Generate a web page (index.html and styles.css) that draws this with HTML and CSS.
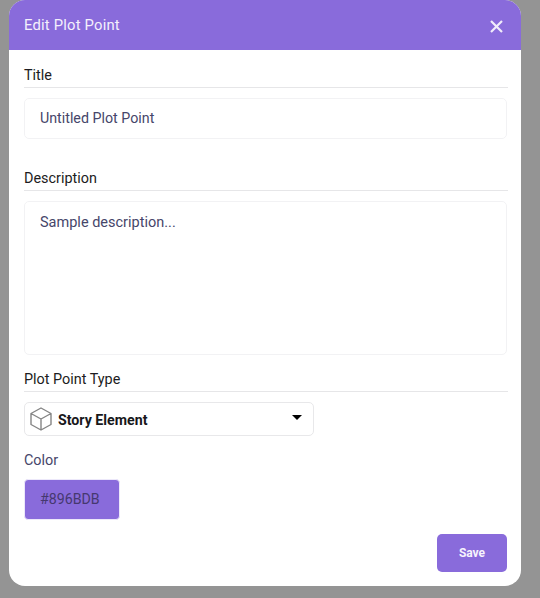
FILE: index.html
```html
<!DOCTYPE html>
<html lang="en">
<head>
    <meta charset="UTF-8">
    <title>Edit Plot Point</title>
    <link rel="stylesheet" href="styles.css">
</head>
<body>
<div class="modal">
    <header class="modal-header">
        <span class="modal-title">Edit Plot Point</span>
        <svg class="close" width="13" height="13" viewBox="0 0 13 13">
            <path d="M1 1L12 12M12 1L1 12" fill="none" stroke="#f1ecfb" stroke-width="2.2"/>
        </svg>
    </header>
    <section class="modal-body">
        <div class="label">Title</div>
        <div class="field title-field">Untitled Plot Point</div>
        <div class="label desc-label">Description</div>
        <div class="field desc-field">Sample description...</div>
        <div class="label type-label">Plot Point Type</div>
        <div class="select">
            <svg class="cube" width="24" height="24" viewBox="0 0 24 24">
                <path d="M12 1L22 6.5V17.5L12 23L2 17.5V6.5ZM2 6.5L12 12L22 6.5M12 12V23" fill="none" stroke="#858585" stroke-width="1.4" stroke-linejoin="round"/>
            </svg>
            <span class="select-text">Story Element</span>
            <span class="caret"></span>
        </div>
        <div class="color-label">Color</div>
        <div class="swatch">#896BDB</div>
        <div class="actions">
            <div class="save">Save</div>
        </div>
    </section>
</div>
</body>
</html>
```

FILE: styles.css
```css
* {
    margin: 0;
    padding: 0;
    box-sizing: border-box;
}

html, body {
    width: 100%;
    height: 100%;
    overflow: hidden;
}

body {
    background: #949494;
    font-family: Roboto, "Liberation Sans", sans-serif;
    padding-left: 9px;
}

.modal {
    width: 512px;
    height: 586px;
    background: white;
    border-radius: 16px;
    overflow: hidden;
}

.modal-header {
    height: 50px;
    background: #896bdb;
    display: flex;
    align-items: center;
    justify-content: space-between;
    padding: 0 18px 0 15px;
}

.modal-title {
    color: #f4f0fc;
    font-size: 14.8px;
    letter-spacing: 0.2px;
}

.close {
    margin-top: 3px;
}

.modal-body {
    padding: 16px 13px 0 15px;
}

.label {
    height: 22px;
    line-height: 19px;
    font-size: 14.4px;
    font-weight: 450;
    color: #1c1c21;
    border-bottom: 1px solid #e6e6e8;
}

.field {
    border: 1px solid #f2f2f4;
    border-radius: 5px;
    margin-top: 10px;
    margin-right: 1px;
    padding-left: 15px;
    color: #46466a;
}

.title-field {
    height: 41px;
    line-height: 39px;
    font-size: 14.25px;
}

.desc-label {
    margin-top: 30px;
}

.desc-field {
    height: 154px;
    padding-top: 12px;
    line-height: 18px;
    font-size: 14.5px;
}

.type-label {
    margin-top: 15px;
}

.select {
    width: 290px;
    height: 34px;
    margin-top: 10px;
    border: 1px solid #e8e8ea;
    border-radius: 5px;
    display: flex;
    align-items: center;
    padding: 0 11px 0 4px;
}

.select-text {
    margin-left: 5px;
    padding-top: 1px;
    flex: 1;
    font-size: 14.2px;
    font-weight: 700;
    color: #17171a;
}

.caret {
    width: 0;
    height: 0;
    margin-bottom: 3px;
    border-left: 5px solid transparent;
    border-right: 5px solid transparent;
    border-top: 5px solid black;
}

.color-label {
    margin-top: 16px;
    font-size: 14.4px;
    line-height: 18px;
    color: #46466a;
}

.swatch {
    width: 96px;
    height: 41px;
    margin-top: 9px;
    background: #896bdb;
    border: 1px solid #ece8fa;
    border-radius: 4px;
    line-height: 39px;
    padding-left: 15px;
    font-size: 14.2px;
    color: #46386f;
}

.actions {
    display: flex;
    justify-content: flex-end;
    margin-top: 14px;
    margin-right: 1px;
}

.save {
    width: 70px;
    height: 38px;
    line-height: 38px;
    background: #896bdb;
    border-radius: 5px;
    text-align: center;
    font-size: 12px;
    font-weight: 700;
    color: #f6f3fd;
}
```
